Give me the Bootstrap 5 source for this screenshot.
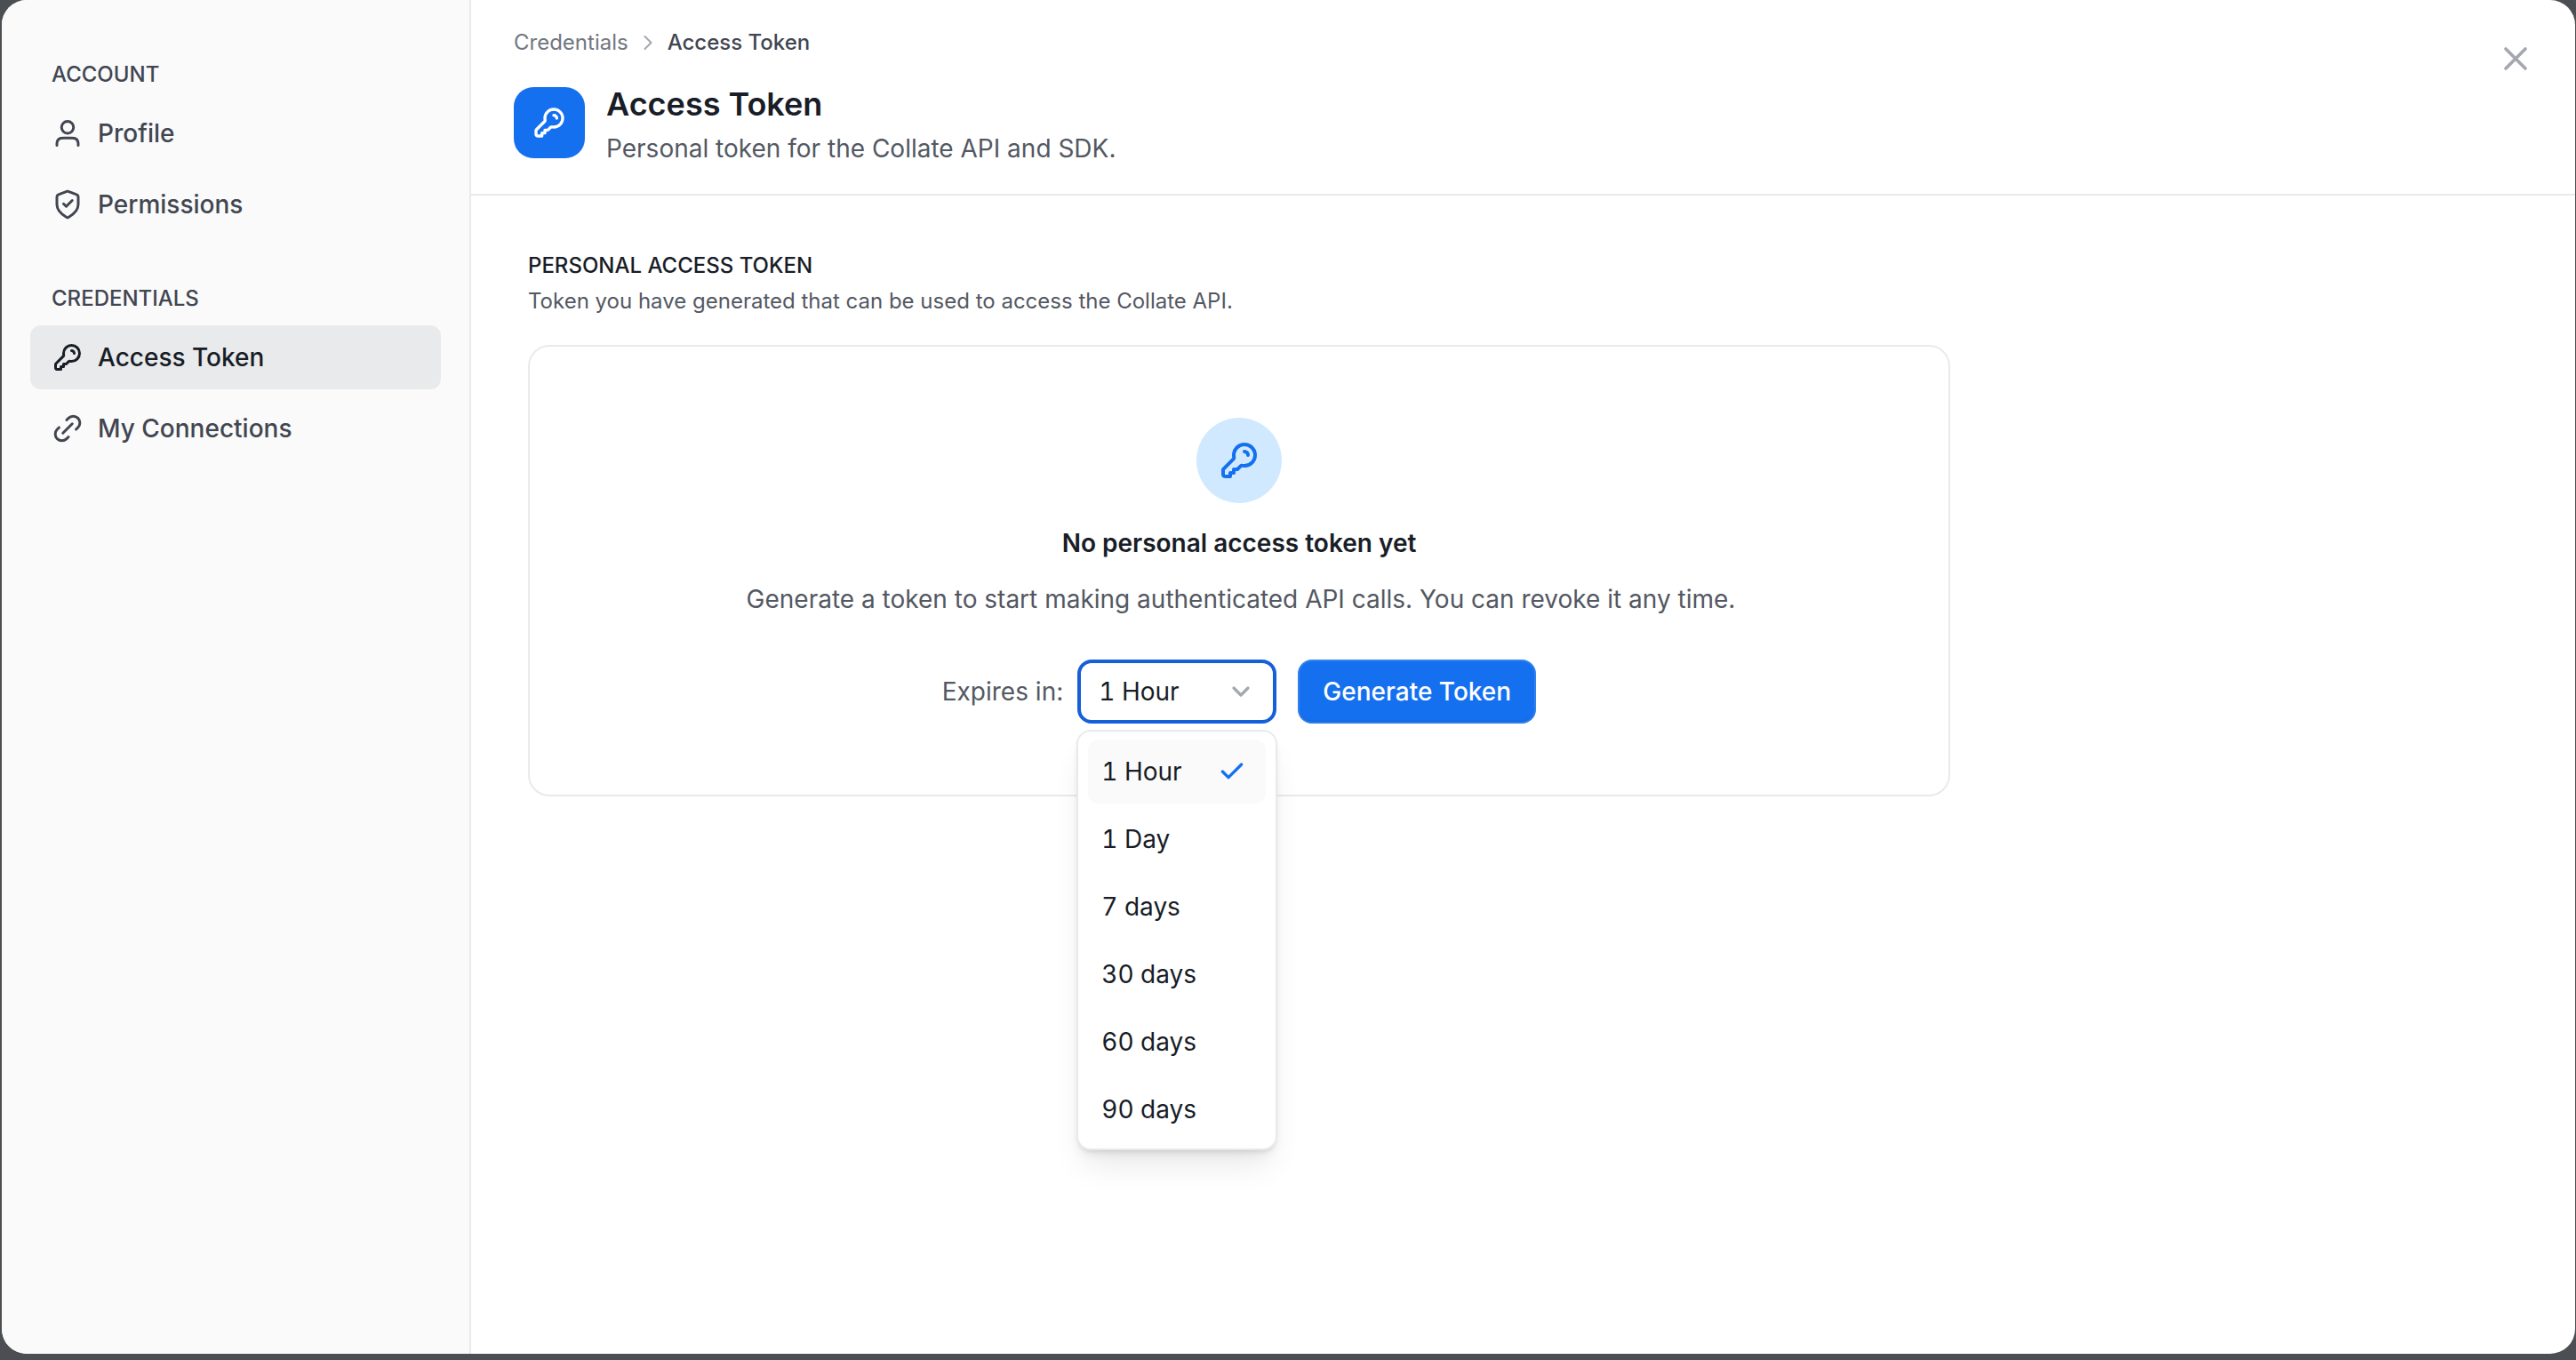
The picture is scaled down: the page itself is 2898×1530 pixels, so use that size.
<!DOCTYPE html>
<html lang="en">
<head>
<meta charset="utf-8">
<title>Access Token</title>
<link href="https://cdn.jsdelivr.net/npm/bootstrap@5.3.0/dist/css/bootstrap.min.css" rel="stylesheet">
<style>
body{background:#4b4f53;font-family:Inter,"Liberation Sans",sans-serif;color:#181d27;overflow:hidden}
.shell{padding:0 1px 7px 2px;height:100vh}
.modal-box{position:relative;background:#fff;border-radius:28px;overflow:hidden;height:100%}
.side{width:528px;flex:none;background:#fafafa;border-right:2px solid #e9eaeb;padding:66px 32px 0}
.side-label{font-size:24px;line-height:36px;font-weight:500;color:#414651;padding-left:24px;margin-bottom:12px}
.side-label.second{margin-top:52px}
.side .nav{gap:8px}
.side .nav-link{height:72px;padding:0 24px;gap:16px;border-radius:12px;font-size:28px;font-weight:500;color:#414651}
.side .nav-link.active{background:#e9eaeb;color:#181d27}
.ico{flex:none;fill:none;stroke:currentColor;stroke-width:2;stroke-linecap:round;stroke-linejoin:round}
.i36{width:36px;height:36px}
.head{border-bottom:2px solid #e9eaeb;padding:30px 48px 40px;height:220px}
.crumbs{font-size:24px;line-height:36px;font-weight:400;color:#717680;margin-bottom:32px;gap:8px}
.crumbs .current{color:#414651;font-weight:500}
.crumbs .ico{width:28px;height:28px;color:#a4a7ae;stroke-width:1.8}
.head-ico{width:80px;height:80px;border-radius:22px;background:#1570ef;color:#fff;gap:0}
.head-ico .ico{width:40px;height:40px}
.head-title{font-size:36px;line-height:38px;font-weight:600;margin:0 0 11px}
.head-sub{font-size:28px;line-height:40px;color:#535862;margin:0}
.close-x{position:absolute;top:44px;right:45px;width:44px;height:44px;padding:0;border:0;background:none;color:#a4a7ae}
.close-x .ico{width:44px;height:44px}
.content{padding:61px 0 0 64px}
.sec-title{font-size:24px;line-height:36px;font-weight:500;margin:0 0 6px}
.sec-sub{font-size:24px;line-height:32px;color:#535862;margin:0 0 33px}
.token-card{width:1600px;border:2px solid #e9eaeb;border-radius:24px;padding:80px 0;--bs-card-bg:#fff}
.key-circle{width:96px;height:96px;border-radius:50%;background:#d1e9ff;color:#1570ef;margin-bottom:25px}
.key-circle .ico{width:48px;height:48px}
.empty-title{font-size:28px;line-height:40px;font-weight:600;margin:0 0 23px}
.empty-desc{font-size:28px;line-height:40px;color:#535862;margin:0 0 48px;padding-left:4px}
.expires{font-size:28px;line-height:40px;color:#535862;margin-right:16px}
.picker{width:224px;margin-right:24px;font-feature-settings:"tnum"}
.picker-btn{width:100%;height:72px;border:4px solid #155fd9;border-radius:16px;background:#fff;padding:0 20px 0 20px;font-size:28px;color:#181d27;font-feature-settings:"tnum"}
.picker-btn::after{display:none}
.picker-btn:hover,.picker-btn:active,.picker-btn.show{border-color:#155fd9;background:#fff;color:#181d27}
.picker-btn .ico{width:32px;height:32px;color:#a4a7ae;stroke-width:2.4}
.picker-menu{--bs-dropdown-min-width:0;width:226px;top:100%;left:-1px;margin-top:7px!important;padding:9px 11px 8px;border:2px solid #e9eaeb;border-radius:16px;background:#fff;box-shadow:0 24px 36px -8px rgba(10,13,18,.09),0 8px 12px -4px rgba(10,13,18,.07),0 3px 4px -1px rgba(10,13,18,.08)}
.picker-menu li+li{margin-top:4px}
.picker-menu .dropdown-item{height:72px;padding:0 16px 0 15px;border-radius:12px;font-size:28px;color:#181d27}
.picker-menu .dropdown-item.active{background:#fafafa;color:#181d27}
.picker-menu .ico{width:32px;height:32px;color:#1570ef;stroke-width:2.5;margin-right:6px}
.gen-btn{height:72px;width:268px;padding:0;border:0;border-radius:16px;background:#1570ef;color:#fff;font-size:28px;font-weight:500;box-shadow:inset 0 0 0 2px rgba(255,255,255,.12),inset 0 -4px 0 rgba(10,13,18,.05)}
.gen-btn:hover{background:#1570ef;color:#fff}
</style>
</head>
<body>
<svg width="0" height="0" class="position-absolute">
<defs>
<symbol id="key" viewBox="0 0 24 24"><path d="M17 8.99994C17 8.48812 16.8047 7.9763 16.4142 7.58579C16.0237 7.19526 15.5118 7 15 7M15 15C18.3137 15 21 12.3137 21 9C21 5.68629 18.3137 3 15 3C11.6863 3 9 5.68629 9 9C9 9.27368 9.01832 9.54308 9.05381 9.80704C9.11218 10.2412 9.14136 10.4583 9.12172 10.5956C9.10125 10.7387 9.0752 10.8157 9.00469 10.9419C8.937 11.063 8.81771 11.1823 8.57913 11.4209L3.46863 16.5314C3.29568 16.7043 3.2092 16.7908 3.14736 16.8917C3.09253 16.9812 3.05213 17.0787 3.02763 17.1808C3 17.2959 3 17.4182 3 17.6627V19.4C3 19.9601 3 20.2401 3.10899 20.454C3.20487 20.6422 3.35785 20.7951 3.54601 20.891C3.75992 21 4.03995 21 4.6 21H7V19H9V17H11L12.5791 15.4209C12.8177 15.1823 12.937 15.063 13.0581 14.9953C13.1843 14.9248 13.2613 14.8987 13.4044 14.8783C13.5417 14.8586 13.7588 14.8878 14.193 14.9462C14.4569 14.9817 14.7263 15 15 15Z"/></symbol>
</defs>
</svg>
<div class="shell">
<div class="modal-box d-flex">
  <aside class="side">
    <div class="side-label">ACCOUNT</div>
    <nav class="nav flex-column">
      <a class="nav-link d-flex align-items-center" href="#"><svg class="ico i36" viewBox="0 0 24 24"><path d="M20 21C20 19.6044 20 18.9067 19.8278 18.3389C19.44 17.0605 18.4395 16.06 17.1611 15.6722C16.5933 15.5 15.8956 15.5 14.5 15.5H9.5C8.10444 15.5 7.40665 15.5 6.83886 15.6722C5.56045 16.06 4.56004 17.0605 4.17224 18.3389C4 18.9067 4 19.6044 4 21M16.5 7.5C16.5 9.98528 14.4853 12 12 12C9.51472 12 7.5 9.98528 7.5 7.5C7.5 5.01472 9.51472 3 12 3C14.4853 3 16.5 5.01472 16.5 7.5Z"/></svg>Profile</a>
      <a class="nav-link d-flex align-items-center" href="#"><svg class="ico i36" viewBox="0 0 24 24"><path d="M9 11.5001L11 13.5001L15.5 9.00011M20 12.0001C20 16.9085 14.646 20.4785 12.698 21.615C12.4766 21.7442 12.3659 21.8087 12.2097 21.8422C12.0884 21.8682 11.9116 21.8682 11.7903 21.8422C11.6341 21.8087 11.5234 21.7442 11.302 21.615C9.35396 20.4785 4 16.9085 4 12.0001V7.21772C4 6.4182 4 6.01845 4.13076 5.67482C4.24627 5.37126 4.43398 5.10039 4.67766 4.88564C4.9535 4.64255 5.3278 4.50219 6.0764 4.22146L11.4382 2.21079C11.6461 2.13283 11.75 2.09385 11.857 2.07839C11.9518 2.06469 12.0482 2.06469 12.143 2.07839C12.25 2.09385 12.3539 2.13283 12.5618 2.21079L17.9236 4.22146C18.6722 4.50219 19.0465 4.64255 19.3223 4.88564C19.566 5.10039 19.7537 5.37126 19.8692 5.67482C20 6.01845 20 6.4182 20 7.21772V12.0001Z"/></svg>Permissions</a>
    </nav>
    <div class="side-label second">CREDENTIALS</div>
    <nav class="nav flex-column">
      <a class="nav-link active d-flex align-items-center" href="#"><svg class="ico i36" viewBox="0 0 24 24"><use href="#key"/></svg>Access Token</a>
      <a class="nav-link d-flex align-items-center" href="#"><svg class="ico i36" viewBox="0 0 24 24"><path d="M12.7076 18.3644L11.2933 19.7786C9.34072 21.7313 6.1749 21.7313 4.22228 19.7786C2.26966 17.826 2.26966 14.6602 4.22228 12.7076L5.63649 11.2933M18.3644 12.7076L19.7786 11.2933C21.7312 9.34072 21.7312 6.1749 19.7786 4.22228C17.826 2.26966 14.6602 2.26966 12.7076 4.22228L11.2933 5.63649M8.50045 15.4999L15.5005 8.49994"/></svg>My Connections</a>
    </nav>
  </aside>
  <main class="flex-grow-1">
    <header class="head">
      <div class="crumbs d-flex align-items-center">
        <span>Credentials</span>
        <svg class="ico" viewBox="0 0 24 24"><path d="M9 18L15 12L9 6"/></svg>
        <span class="current">Access Token</span>
      </div>
      <div class="d-flex gap-4">
        <div class="head-ico d-flex align-items-center justify-content-center"><svg class="ico" viewBox="0 0 24 24"><use href="#key"/></svg></div>
        <div>
          <h1 class="head-title">Access Token</h1>
          <p class="head-sub">Personal token for the Collate API and SDK.</p>
        </div>
      </div>
    </header>
    <button class="close-x" type="button" aria-label="Close"><svg class="ico" viewBox="0 0 24 24"><path d="M18 6L6 18M6 6L18 18"/></svg></button>
    <section class="content">
      <h2 class="sec-title">PERSONAL ACCESS TOKEN</h2>
      <p class="sec-sub">Token you have generated that can be used to access the Collate API.</p>
      <div class="card token-card align-items-center">
        <div class="key-circle d-flex align-items-center justify-content-center"><svg class="ico" viewBox="0 0 24 24"><use href="#key"/></svg></div>
        <h3 class="empty-title">No personal access token yet</h3>
        <p class="empty-desc">Generate a token to start making authenticated API calls. You can revoke it any time.</p>
        <div class="d-flex align-items-center">
          <span class="expires">Expires in:</span>
          <div class="dropdown picker">
            <button class="btn picker-btn dropdown-toggle show d-flex align-items-center justify-content-between" type="button">1 Hour<svg class="ico" viewBox="0 0 24 24"><path d="M6 9L12 15L18 9"/></svg></button>
            <ul class="dropdown-menu show picker-menu">
              <li><a class="dropdown-item active d-flex align-items-center justify-content-between" href="#">1 Hour<svg class="ico" viewBox="0 0 24 24"><path d="M20 6L9 17L4 12"/></svg></a></li>
              <li><a class="dropdown-item d-flex align-items-center" href="#">1 Day</a></li>
              <li><a class="dropdown-item d-flex align-items-center" href="#">7 days</a></li>
              <li><a class="dropdown-item d-flex align-items-center" href="#">30 days</a></li>
              <li><a class="dropdown-item d-flex align-items-center" href="#">60 days</a></li>
              <li><a class="dropdown-item d-flex align-items-center" href="#">90 days</a></li>
            </ul>
          </div>
          <button class="btn gen-btn" type="button">Generate Token</button>
        </div>
      </div>
    </section>
  </main>
</div>
</div>
<script src="https://cdn.jsdelivr.net/npm/bootstrap@5.3.0/dist/js/bootstrap.bundle.min.js"></script>
</body>
</html>
